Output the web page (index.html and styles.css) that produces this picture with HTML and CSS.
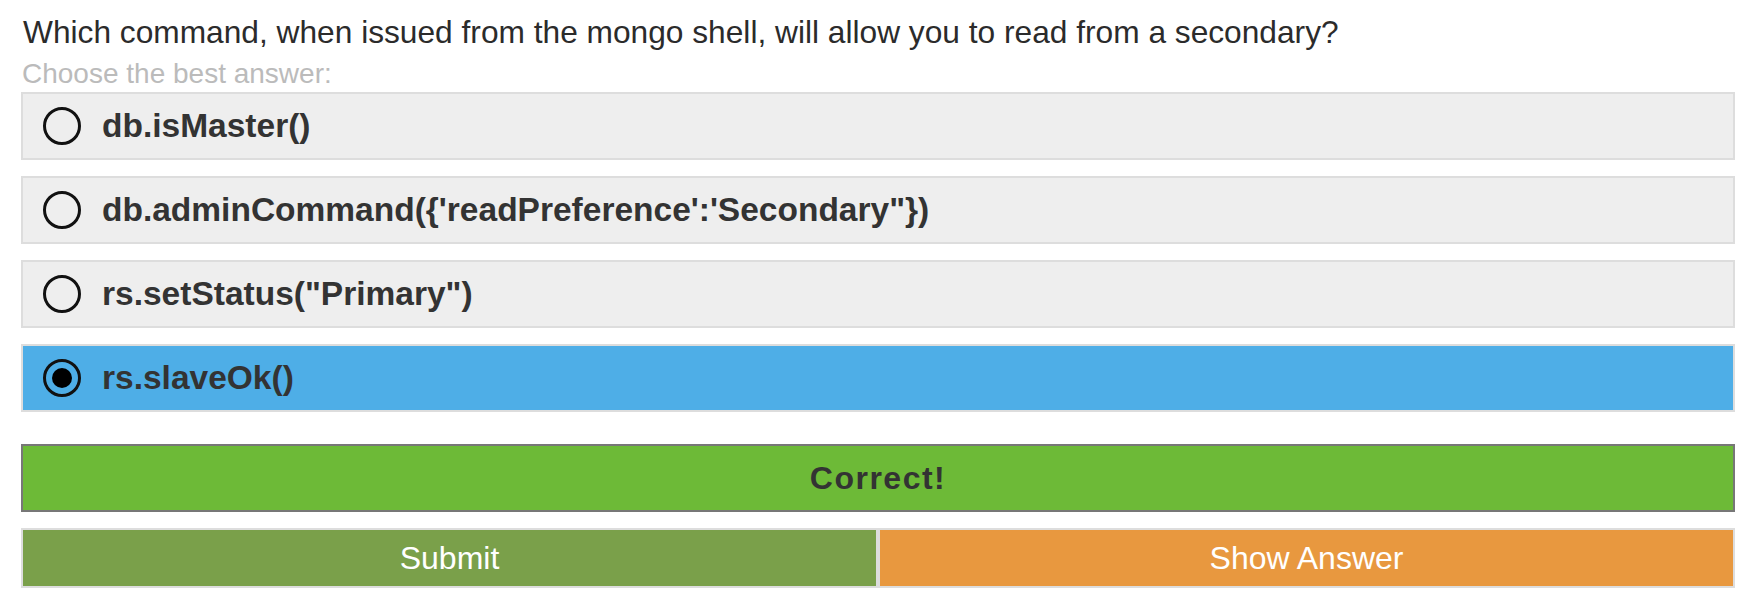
FILE: index.html
```html
<!DOCTYPE html>
<html>
<head>
<meta charset="utf-8">
<link rel="stylesheet" href="styles.css">
</head>
<body>
<div class="quiz">
  <div class="question">Which command, when issued from the mongo shell, will allow you to read from a secondary?</div>
  <div class="hint">Choose the best answer:</div>
  <div class="options">
    <div class="option">
      <svg class="radio" viewBox="0 0 40 40" width="40" height="40"><circle cx="20" cy="20" r="17.5" fill="none" stroke="#111" stroke-width="3"/></svg>
      <span class="label">db.isMaster()</span>
    </div>
    <div class="option">
      <svg class="radio" viewBox="0 0 40 40" width="40" height="40"><circle cx="20" cy="20" r="17.5" fill="none" stroke="#111" stroke-width="3"/></svg>
      <span class="label">db.adminCommand({'readPreference':'Secondary"})</span>
    </div>
    <div class="option">
      <svg class="radio" viewBox="0 0 40 40" width="40" height="40"><circle cx="20" cy="20" r="17.5" fill="none" stroke="#111" stroke-width="3"/></svg>
      <span class="label">rs.setStatus("Primary")</span>
    </div>
    <div class="option selected">
      <svg class="radio" viewBox="0 0 40 40" width="40" height="40"><circle cx="20" cy="20" r="17.5" fill="none" stroke="#111" stroke-width="3"/><circle cx="20" cy="20" r="10" fill="#000"/></svg>
      <span class="label">rs.slaveOk()</span>
    </div>
  </div>
  <div class="result">Correct!</div>
  <div class="actions">
    <div class="btn submit">Submit</div>
    <div class="btn show">Show Answer</div>
  </div>
</div>
</body>
</html>
```

FILE: styles.css
```css
html, body {
  margin: 0;
  padding: 0;
  background: #ffffff;
}

.quiz {
  margin: 0 24px 0 21px;
  padding-top: 12px;
  font-family: "Liberation Sans", Arial, sans-serif;
}

.question {
  font-size: 31.7px;
  line-height: 40px;
  color: #2b2b2b;
  padding-left: 2px;
}

.hint {
  margin-top: 4px;
  font-size: 28px;
  line-height: 36px;
  color: #bbbbbb;
  padding-left: 1px;
}

.options {
  display: flex;
  flex-direction: column;
  gap: 16px;
}

.option {
  display: flex;
  align-items: center;
  gap: 20px;
  height: 64px;
  padding-left: 19px;
  background: #eeeeee;
  border: 2px solid #dddddd;
}

.option.selected {
  background: #4eaee7;
}

.radio {
  display: block;
  flex: none;
}

.label {
  font-size: 33.5px;
  font-weight: bold;
  color: #333333;
}

.result {
  margin-top: 32px;
  height: 64px;
  display: flex;
  align-items: center;
  justify-content: center;
  background: #6dba37;
  border: 2px solid #777777;
  font-size: 32px;
  font-weight: bold;
  letter-spacing: 1.5px;
  color: #333333;
}

.actions {
  margin-top: 16px;
  display: flex;
}

.btn {
  flex: 1 1 0;
  height: 56px;
  display: flex;
  align-items: center;
  justify-content: center;
  border: 2px solid #dddddd;
  font-size: 32px;
  color: #ffffff;
}

.submit {
  background: #7aa04a;
}

.show {
  background: #e8983f;
}
```
